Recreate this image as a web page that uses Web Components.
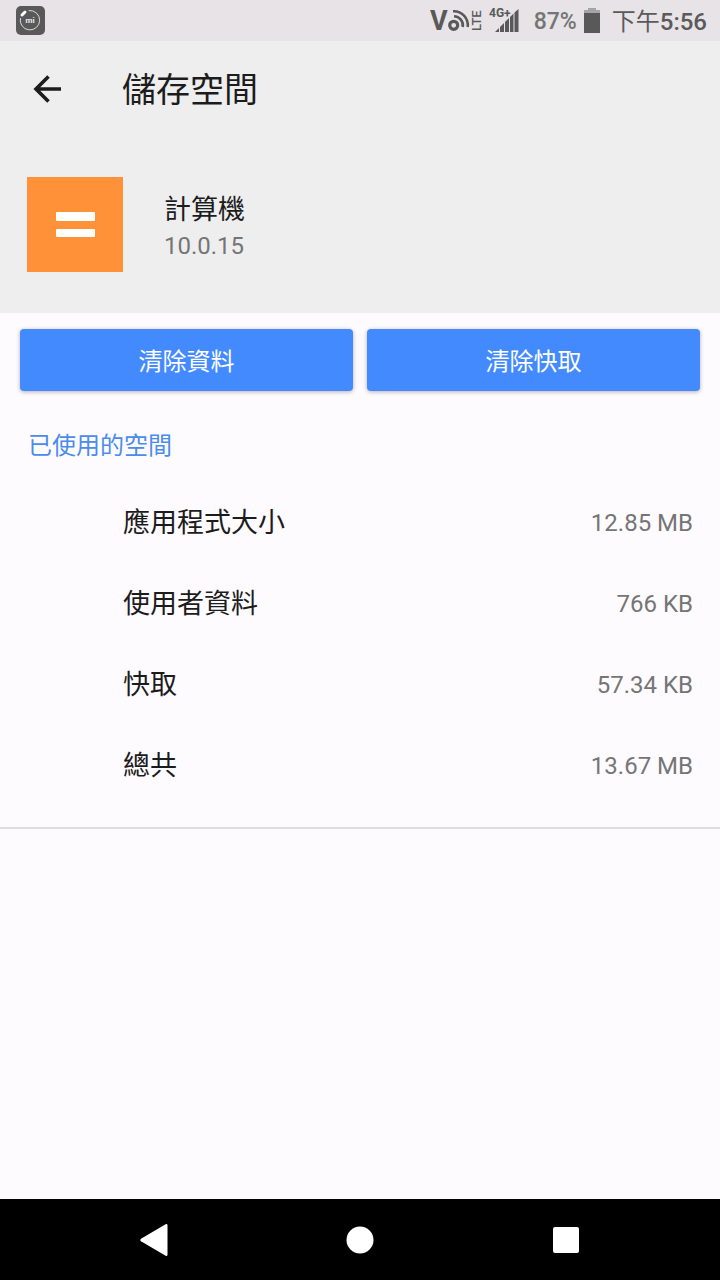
<!DOCTYPE html>
<html lang="zh-Hant">
<head>
<meta charset="utf-8">
<meta name="viewport" content="width=device-width, initial-scale=1">
<title>儲存空間</title>
<style>
    body {
        margin: 0;
        font-family: Roboto, "Noto Sans CJK TC", sans-serif;
        color: #1c1c1c;
        background: #fefbff;
    }
</style>
</head>
<body>
<storage-screen>
    <status-bar slot="status" battery="87%" period="下午" time="5:56"></status-bar>
    <title-bar slot="header">儲存空間</title-bar>
    <app-header slot="header" version="10.0.15">計算機</app-header>
    <button-row>
        <action-button>清除資料</action-button>
        <action-button>清除快取</action-button>
    </button-row>
    <storage-section heading="已使用的空間">
        <storage-row value="12.85 MB">應用程式大小</storage-row>
        <storage-row value="766 KB">使用者資料</storage-row>
        <storage-row value="57.34 KB">快取</storage-row>
        <storage-row value="13.67 MB">總共</storage-row>
    </storage-section>
    <nav-bar slot="nav"></nav-bar>
</storage-screen>

<script>
class StorageScreen extends HTMLElement {
    constructor() {
        super();
        this.attachShadow({ mode: 'open' }).innerHTML = `
            <style>
                :host {
                    display: flex;
                    flex-direction: column;
                    min-height: 100vh;
                }
                header { background: #eeeeee; }
                main { flex: 1; padding-top: 16px; }
            </style>
            <slot name="status"></slot>
            <header><slot name="header"></slot></header>
            <main><slot></slot></main>
            <slot name="nav"></slot>
        `;
    }
}

class StatusBar extends HTMLElement {
    connectedCallback() {
        this.attachShadow({ mode: 'open' }).innerHTML = `
            <style>
                :host {
                    display: flex;
                    align-items: center;
                    height: 41px;
                    padding: 0 13px 0 16px;
                    background: #e7e3e7;
                    color: #5a5a5a;
                    font-size: 24px;
                    line-height: 40px;
                    white-space: nowrap;
                }
                svg { display: block; }
                .icons { margin-left: auto; }
                .battery { margin: 0 12px 0 14px; display: flex; align-items: center; gap: 7px; }
                .level { padding-top: 3px; font-size: 23px; font-weight: 500; color: #757575; }
                .time { display: flex; padding-top: 2px; }
                b { font-weight: 500; }
            </style>
            <svg width="29" height="41" viewBox="0 0 29 41" aria-hidden="true">
                <rect y="6" width="29" height="29" rx="5" fill="#595959"/>
                <path d="M12.7 10.6A9.7 9.7 0 1 1 4.5 18" fill="none" stroke="#d8d8d8" stroke-width="1"/>
                <path d="M6 15L9 12" stroke="#fff" stroke-width="3" stroke-linecap="round"/>
                <text x="14" y="23" text-anchor="middle" font-size="8" font-weight="700" fill="#eee">mi</text>
            </svg>
            <svg class="icons" width="90" height="41" viewBox="430 0 90 41" fill="#595959" aria-hidden="true">
                <text x="430" y="30" font-size="27" font-weight="700">V</text>
                <g fill="none" stroke="#595959">
                    <circle cx="453.700" cy="25.300" r="4" stroke-width="3.200"/>
                    <path d="M454 16.300A9 9 0 0 1 462.700 27M453 11.300A14 14 0 0 1 467.700 27" stroke-width="2.600"/>
                </g>
                <text transform="translate(481 31) rotate(-90)" font-size="13" font-weight="500">LTE</text>
                <text x="489" y="17" font-size="12" font-weight="700">4G</text>
                <text x="504" y="18" font-size="12" font-weight="700">+</text>
                <path d="M495 32L499 28V32ZM500 27L504 23V32H500ZM505 22L509 18V32H505ZM510 17L513.500 13.500V32H510ZM514.500 12.500L518.500 9V32H514.500Z"/>
            </svg>
            <span class="battery">
                <span class="level">${this.getAttribute('battery')}</span>
                <svg width="16" height="25" viewBox="0 0 16 25" aria-hidden="true">
                    <path d="M4 0H12V2H16V6H0V2H4Z" fill="#a6a4a6"/>
                    <path d="M0 5H16V25H0Z" fill="#595959"/>
                </svg>
            </span>
            <span class="time"><span>${this.getAttribute('period')}</span><b>${this.getAttribute('time')}</b></span>
        `;
    }
}

class TitleBar extends HTMLElement {
    constructor() {
        super();
        this.attachShadow({ mode: 'open' }).innerHTML = `
            <style>
                :host {
                    display: flex;
                    align-items: center;
                    gap: 48px;
                    height: 96px;
                    padding: 0 20px;
                }
                button {
                    display: grid;
                    place-items: center;
                    width: 54px;
                    height: 56px;
                    padding: 0;
                    border: 0;
                    background: none;
                    color: inherit;
                }
                h1 { margin: 0; padding-top: 2px; font-size: 34px; font-weight: 400; line-height: 48px; }
            </style>
            <button type="button" aria-label="返回">
                <svg width="28" height="28" viewBox="0 0 28 28" fill="none" stroke="currentColor" stroke-width="3.600">
                    <path d="M28 14H3M15.500 1.500L3 14L15.500 26.500"/>
                </svg>
            </button>
            <h1><slot></slot></h1>
        `;
    }
}

class AppHeader extends HTMLElement {
    connectedCallback() {
        this.attachShadow({ mode: 'open' }).innerHTML = `
            <style>
                :host {
                    display: flex;
                    align-items: center;
                    gap: 41px;
                    padding: 40px 27px 41px;
                }
                svg { display: block; }
                div { padding-top: 6px; }
                h2 { margin: 0; font-size: 27px; font-weight: 400; line-height: 36px; }
                p { margin: 0; font-size: 24px; line-height: 36px; color: #757575; }
            </style>
            <svg width="96" height="95" viewBox="0 0 96 95" aria-hidden="true">
                <rect width="96" height="95" fill="#ff9138"/>
                <rect x="29" y="35" width="39" height="9" rx="1" fill="#fff"/>
                <rect x="29" y="52" width="39" height="8" rx="1" fill="#fff"/>
            </svg>
            <div>
                <h2><slot></slot></h2>
                <p>${this.getAttribute('version')}</p>
            </div>
        `;
    }
}

class ButtonRow extends HTMLElement {
    constructor() {
        super();
        this.attachShadow({ mode: 'open' }).innerHTML = `
            <style>
                :host { display: flex; gap: 14px; padding: 0 20px; }
                ::slotted(*) { flex: 1; }
            </style>
            <slot></slot>
        `;
    }
}

class ActionButton extends HTMLElement {
    constructor() {
        super();
        this.attachShadow({ mode: 'open' }).innerHTML = `
            <style>
                :host { display: block; }
                button {
                    display: block;
                    width: 100%;
                    height: 62px;
                    padding: 3px 0 0;
                    border: 0;
                    border-radius: 4px;
                    background: #448aff;
                    box-shadow: 0 1px 4px rgba(0, 0, 0, 0.3);
                    color: #fff;
                    font: inherit;
                    font-size: 24px;
                    line-height: 36px;
                }
            </style>
            <button type="button"><slot></slot></button>
        `;
    }
}

class StorageSection extends HTMLElement {
    connectedCallback() {
        this.attachShadow({ mode: 'open' }).innerHTML = `
            <style>
                :host {
                    display: block;
                    padding: 37px 0 21px;
                    border-bottom: 2px solid #dfdce0;
                }
                h3 {
                    margin: 0 28px 18px;
                    color: #4a8cec;
                    font-size: 24px;
                    font-weight: 400;
                    line-height: 36px;
                }
            </style>
            <h3>${this.getAttribute('heading')}</h3>
            <slot></slot>
        `;
    }
}

class StorageRow extends HTMLElement {
    connectedCallback() {
        this.attachShadow({ mode: 'open' }).innerHTML = `
            <style>
                :host {
                    display: flex;
                    align-items: center;
                    justify-content: space-between;
                    height: 81px;
                    padding: 0 27px 0 123px;
                    font-size: 27px;
                    line-height: 36px;
                }
                .value { font-size: 24px; color: #757575; }
            </style>
            <span><slot></slot></span>
            <span class="value">${this.getAttribute('value')}</span>
        `;
    }
}

class NavBar extends HTMLElement {
    constructor() {
        super();
        this.attachShadow({ mode: 'open' }).innerHTML = `
            <style>
                :host {
                    display: flex;
                    justify-content: center;
                    gap: 126px;
                    height: 81px;
                    background: #000;
                }
                button {
                    display: grid;
                    place-items: center;
                    width: 80px;
                    padding: 0;
                    border: 0;
                    background: none;
                }
            </style>
            <button type="button" aria-label="返回">
                <svg width="28" height="32" viewBox="0 0 28 32" fill="#fff">
                    <path d="M25.600 0.300Q27.500-.6 27.500 1.500V30.500Q27.500 32.600 25.600 31.700L1 17.300Q-.4 16 1 14.700Z"/>
                </svg>
            </button>
            <button type="button" aria-label="主畫面">
                <svg width="28" height="28" viewBox="0 0 28 28" fill="#fff"><circle cx="14" cy="14" r="13.500"/></svg>
            </button>
            <button type="button" aria-label="最近使用">
                <svg width="26" height="26" viewBox="0 0 26 26" fill="#fff"><rect width="26" height="26" rx="2"/></svg>
            </button>
        `;
    }
}

customElements.define('storage-screen', StorageScreen);
customElements.define('status-bar', StatusBar);
customElements.define('title-bar', TitleBar);
customElements.define('app-header', AppHeader);
customElements.define('button-row', ButtonRow);
customElements.define('action-button', ActionButton);
customElements.define('storage-section', StorageSection);
customElements.define('storage-row', StorageRow);
customElements.define('nav-bar', NavBar);
</script>
</body>
</html>
